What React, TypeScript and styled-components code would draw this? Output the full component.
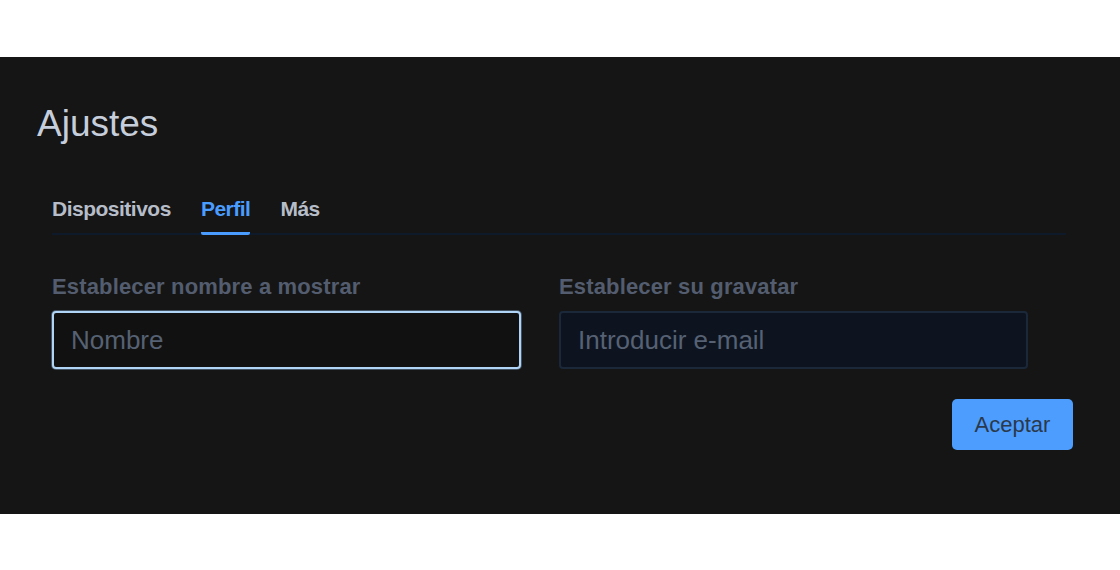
import styled, { createGlobalStyle } from "styled-components";
import { useState } from "react";

const GlobalStyle = createGlobalStyle`
  html, body {
    margin: 0;
    padding: 0;
    background: #ffffff;
  }
  body {
    font-family: "Liberation Sans", Arial, sans-serif;
  }
`;

const Page = styled.div`
  width: 1120px;
  height: 570px;
  padding-top: 57px;
  box-sizing: border-box;
  background: #ffffff;
`;

const Panel = styled.section`
  height: 457px;
  box-sizing: border-box;
  padding: 48px 47px 0 37px;
  background: #151515;
`;

const Title = styled.h1`
  margin: 0;
  font-size: 37px;
  line-height: 37px;
  font-weight: 400;
  color: #c6cedb;
`;

const Body = styled.div`
  margin: 55px 0 0 15px;
`;

const TabBar = styled.nav`
  display: flex;
  gap: 30px;
  margin-right: 7px;
  border-bottom: 2px solid #0e192a;
`;

const Tab = styled.button<{ active: boolean }>`
  margin: 0 0 -2px;
  padding: 0 0 11px;
  border: none;
  border-bottom: 3px solid ${(props) => (props.active ? "#4a9dff" : "transparent")};
  border-radius: 2px;
  background: none;
  font-family: inherit;
  font-size: 21px;
  line-height: 24px;
  font-weight: 700;
  letter-spacing: -0.5px;
  color: ${(props) => (props.active ? "#4a9dff" : "#b6bdc8")};
  cursor: pointer;
`;

const Fields = styled.div`
  display: grid;
  grid-template-columns: 469px 469px;
  column-gap: 38px;
  margin-top: 40px;
`;

const Field = styled.label`
  display: flex;
  flex-direction: column;
  gap: 12px;
`;

const FieldLabel = styled.span`
  font-size: 22px;
  line-height: 24px;
  font-weight: 700;
  letter-spacing: 0.15px;
  color: #535d6f;
`;

const Input = styled.input<{ focused: boolean }>`
  height: 58px;
  box-sizing: border-box;
  padding: 0 17px;
  border-radius: 4px;
  border: 2px solid ${(props) => (props.focused ? "#b0d4f6" : "#1b2839")};
  box-shadow: ${(props) => (props.focused ? "0 0 0 1px rgba(150, 195, 240, 0.35)" : "none")};
  background: ${(props) => (props.focused ? "#111111" : "#0d1420")};
  font-family: inherit;
  font-size: 26px;
  color: #c8cfd9;
  outline: none;

  &::placeholder {
    color: #566173;
  }
`;

const Footer = styled.div`
  display: flex;
  justify-content: flex-end;
  margin-top: 30px;
`;

const Button = styled.button`
  width: 121px;
  height: 51px;
  border: none;
  border-radius: 5px;
  background: #4d9dff;
  font-family: inherit;
  font-size: 22px;
  color: #2a394b;
  cursor: pointer;
`;

const tabs = ["Dispositivos", "Perfil", "Más"];

export default function App() {
  const [active, setActive] = useState("Perfil");

  return (
    <Page>
      <GlobalStyle />
      <Panel>
        <Title>Ajustes</Title>
        <Body>
          <TabBar>
            {tabs.map((t) => (
              <Tab key={t} active={t === active} onClick={() => setActive(t)}>
                {t}
              </Tab>
            ))}
          </TabBar>
          <Fields>
            <Field>
              <FieldLabel>Establecer nombre a mostrar</FieldLabel>
              <Input focused placeholder="Nombre" />
            </Field>
            <Field>
              <FieldLabel>Establecer su gravatar</FieldLabel>
              <Input focused={false} placeholder="Introducir e-mail" />
            </Field>
          </Fields>
          <Footer>
            <Button>Aceptar</Button>
          </Footer>
        </Body>
      </Panel>
    </Page>
  );
}
